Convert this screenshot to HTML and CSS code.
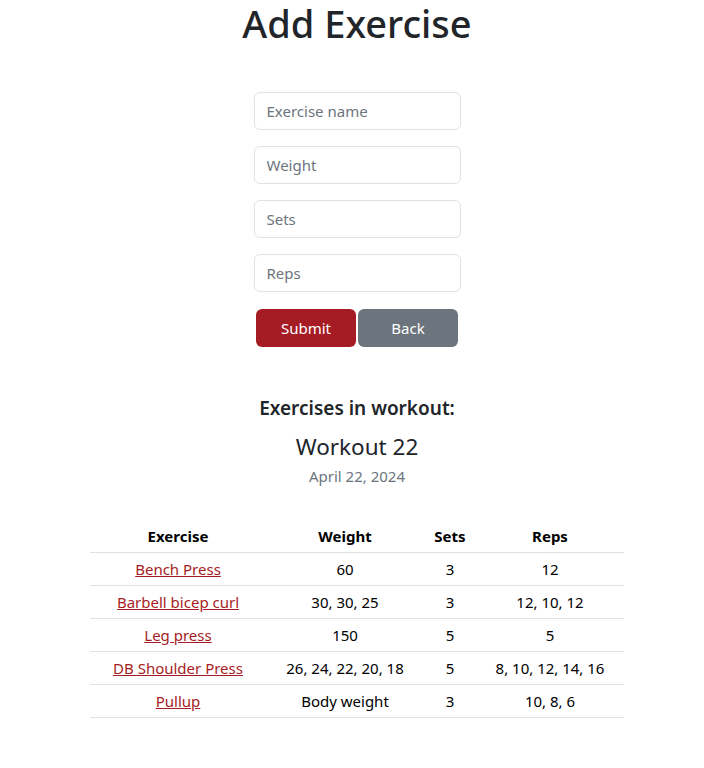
FILE: index.html
```html
<!DOCTYPE html>
<html>
<head>
<meta charset="utf-8">
<link rel="stylesheet" href="styles.css">
</head>
<body>
<div class="page">
  <h1 class="title">Add Exercise</h1>
  <form class="form">
    <input class="field" type="text" placeholder="Exercise name">
    <input class="field" type="text" placeholder="Weight">
    <input class="field" type="text" placeholder="Sets">
    <input class="field" type="text" placeholder="Reps">
    <div class="actions">
      <button type="button" class="btn btn-submit">Submit</button>
      <button type="button" class="btn btn-back">Back</button>
    </div>
  </form>
  <h2 class="subhead">Exercises in workout:</h2>
  <div class="workout-name">Workout 22</div>
  <div class="workout-date">April 22, 2024</div>
  <table class="table">
    <thead>
      <tr><th class="c1">Exercise</th><th class="c2">Weight</th><th class="c3">Sets</th><th class="c4">Reps</th></tr>
    </thead>
    <tbody>
      <tr><td><a href="#">Bench Press</a></td><td>60</td><td>3</td><td>12</td></tr>
      <tr><td><a href="#">Barbell bicep curl</a></td><td>30, 30, 25</td><td>3</td><td>12, 10, 12</td></tr>
      <tr><td><a href="#">Leg press</a></td><td>150</td><td>5</td><td>5</td></tr>
      <tr><td><a href="#">DB Shoulder Press</a></td><td>26, 24, 22, 20, 18</td><td>5</td><td>8, 10, 12, 14, 16</td></tr>
      <tr><td><a href="#">Pullup</a></td><td>Body weight</td><td>3</td><td>10, 8, 6</td></tr>
    </tbody>
  </table>
</div>
</body>
</html>
```

FILE: styles.css
```css
html, body {
  margin: 0;
  padding: 0;
  background: #fff;
}
body {
  font-family: "Noto Sans", "Open Sans", sans-serif;
  font-size: 15px;
  line-height: 24px;
  color: #212529;
}
.page {
  padding-left: 10px;
  display: flex;
  flex-direction: column;
  align-items: center;
}
.title {
  margin: 0;
  font-size: 38px;
  font-weight: 500;
  line-height: 46px;
  padding-bottom: 2px;
}
.form {
  margin-top: 44px;
  display: flex;
  flex-direction: column;
  align-items: center;
  width: 207px;
}
.field {
  box-sizing: border-box;
  width: 207px;
  height: 38px;
  margin: 0 0 16px 0;
  padding: 6px 12px;
  border: 1px solid #dee2e6;
  border-radius: 6px;
  font-family: inherit;
  font-size: 15px;
  color: #212529;
  background: #fff;
}
.field::placeholder {
  color: #6c757d;
  opacity: 1;
}
.actions {
  display: flex;
  gap: 2px;
  margin-top: 1px;
}
.btn {
  width: 100px;
  height: 38px;
  border: none;
  border-radius: 6px;
  color: #fff;
  font-family: inherit;
  font-size: 15px;
  padding: 0;
}
.btn-submit { background: #a51c24; }
.btn-back { background: #6c757d; }
.subhead {
  margin: 49px 0 0 0;
  font-size: 19px;
  font-weight: 600;
  line-height: 24px;
}
.workout-name {
  margin-top: 12px;
  font-size: 22.5px;
  line-height: 29px;
}
.workout-date {
  margin-top: 3px;
  color: #6c757d;
  line-height: 24px;
}
.table {
  margin-top: 32px;
  width: 534px;
  border-collapse: collapse;
  color: #000;
}
.table th, .table td {
  text-align: center;
  padding: 4px;
  line-height: 24px;
  border-bottom: 1px solid #dee2e6;
}
.table th { font-weight: 700; }
.c1 { width: 168px; }
.c2 { width: 150px; }
.c3 { width: 44px; }
.c4 { width: 140px; }
.table a {
  color: #a51c24;
  text-decoration: underline;
}
```
